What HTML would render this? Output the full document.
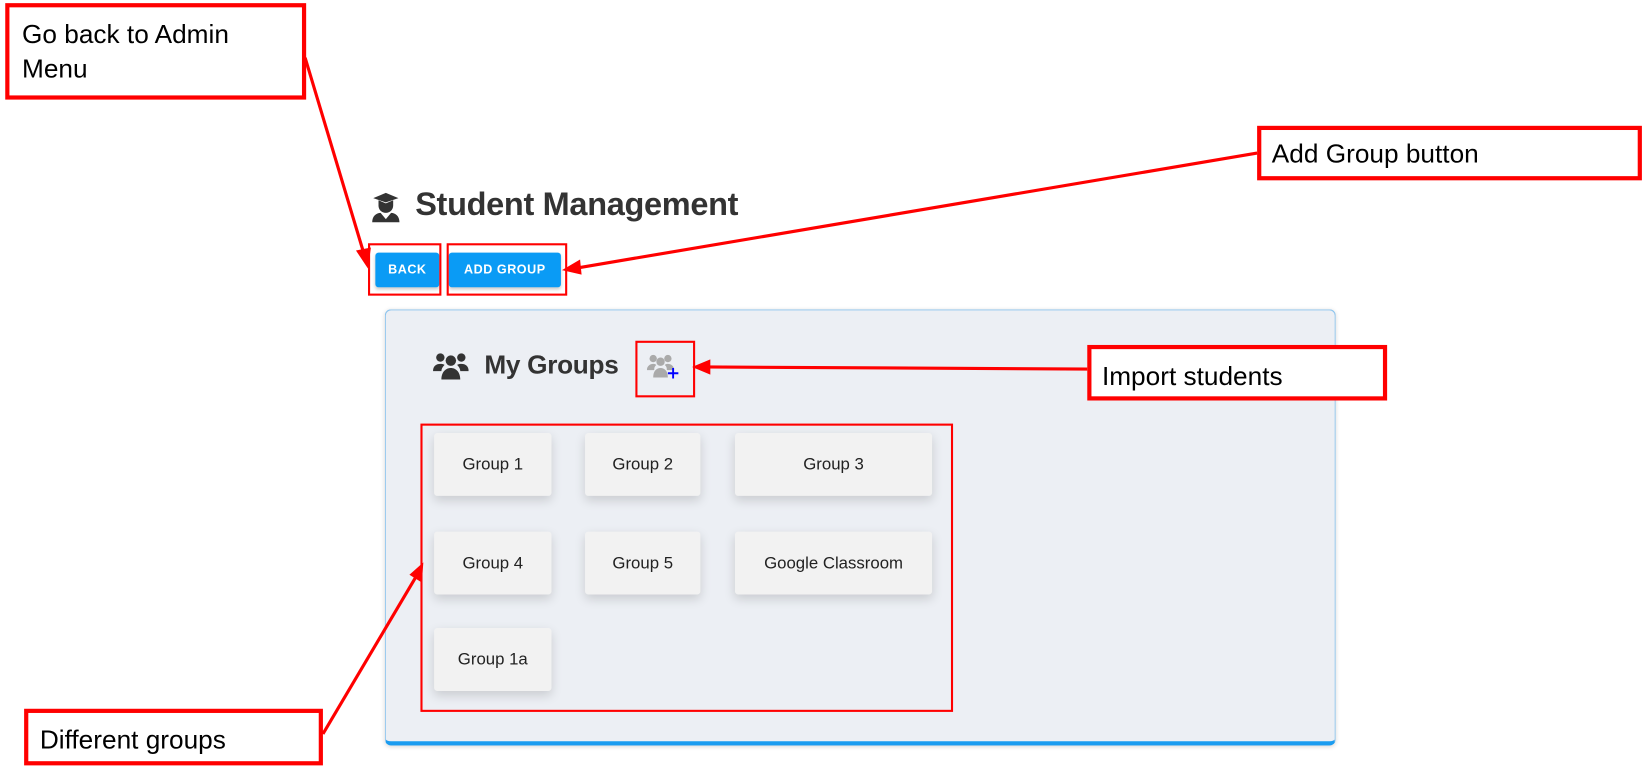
<!DOCTYPE html>
<html><head><meta charset="utf-8"><style>
html,body{margin:0;padding:0;background:#fff;width:1644px;height:777px;overflow:hidden}
#w{position:absolute;left:0;top:0;width:1568px;height:741px;transform:scale(1.04847);transform-origin:0 0;font-family:"Liberation Sans",sans-serif}
.a{position:absolute;box-sizing:border-box}
.rb{border:4px solid #f00;background:#fff}
.rt{border:2px solid #f00}
.lbl{font-size:25px;color:#000;line-height:33px}
.btn{background:#0a9bf5;color:#fff;font-weight:bold;font-size:12px;letter-spacing:.5px;text-align:center;line-height:33px;border-radius:3px;box-shadow:0 2px 3px rgba(0,0,0,.2)}
.card{background:#f2f2f2;border-radius:3px;box-shadow:0 4px 10px rgba(0,0,0,.15);font-size:16px;color:#222;text-align:center;line-height:62px}
</style></head><body><div id="w">
<svg class="a" style="left:353px;top:183px" width="32" height="30" viewBox="0 0 32 30"><path d="M3 6 L15 1 L27 6 L15 10Z M8 8v5c0 4 3 7 7 7s7-3 7-7V8L15 11Z M2 29 c0-6 4-9 8-9 l5 6 5-6 c4 0 8 3 8 9Z" fill="#333"/></svg>
<div class="a" style="left:396px;top:177px;font-size:31px;font-weight:bold;color:#333;letter-spacing:-.3px">Student Management</div>
<div class="a btn" style="left:358px;top:241px;width:61px;height:33px">BACK</div>
<div class="a btn" style="left:428px;top:241px;width:107px;height:33px">ADD GROUP</div>
<div class="a rt" style="left:351px;top:232px;width:70px;height:50px"></div>
<div class="a rt" style="left:426px;top:232px;width:115px;height:50px"></div>

<div class="a" style="left:367px;top:295px;width:907px;height:416px;background:#eceff4;border:1px solid #8cc4ee;border-bottom:4px solid #1a9cf0;border-radius:6px;box-shadow:0 1px 4px rgba(0,0,0,.15)"></div>
<svg class="a" style="left:413px;top:335px" width="34" height="28" viewBox="0 0 34 28"><circle cx="7" cy="6" r="4" fill="#333"/><circle cx="27" cy="6" r="4" fill="#333"/><circle cx="17" cy="9" r="5" fill="#333"/><path d="M0 19c0-5 3-7 7-7 3 0 4 1 4 1-2 2-3 4-3 6Z M34 19c0-5-3-7-7-7-3 0-4 1-4 1 2 2 3 4 3 6Z M8 27c0-7 4-11 9-11s9 4 9 11Z" fill="#333"/></svg>
<div class="a" style="left:462px;top:334px;font-size:25px;font-weight:bold;color:#333;letter-spacing:-.3px">My Groups</div>
<svg class="a" style="left:617px;top:337px" width="32" height="26" viewBox="0 0 32 26"><circle cx="6" cy="5" r="3.5" fill="#aaa"/><circle cx="20" cy="5" r="3.5" fill="#aaa"/><circle cx="13" cy="8" r="4" fill="#aaa"/><path d="M0 16c0-4 3-6 6-6 2 0 3 1 3 1-2 2-2 3-2 5Z M26 16c0-4-3-6-6-6-2 0-3 1-3 1 2 2 2 3 2 5Z M6 23c0-6 3-9 7-9s7 3 7 9Z" fill="#aaa"/><path d="M25 14v10M20 19h10" stroke="#00f" stroke-width="1.8"/></svg>
<div class="a rt" style="left:606px;top:325px;width:57px;height:54px"></div>

<div class="a card" style="left:414px;top:413px;width:112px;height:60px">Group 1</div>
<div class="a card" style="left:558px;top:413px;width:110px;height:60px">Group 2</div>
<div class="a card" style="left:701px;top:413px;width:188px;height:60px">Group 3</div>
<div class="a card" style="left:414px;top:507px;width:112px;height:60px">Group 4</div>
<div class="a card" style="left:558px;top:507px;width:110px;height:60px">Group 5</div>
<div class="a card" style="left:701px;top:507px;width:188px;height:60px">Google Classroom</div>
<div class="a card" style="left:414px;top:599px;width:112px;height:60px">Group 1a</div>
<div class="a rt" style="left:401px;top:404px;width:508px;height:275px"></div>

<div class="a rb lbl" style="left:5px;top:3px;width:287px;height:92px;padding:10px 0 0 12px">Go back to Admin<br>Menu</div>
<div class="a rb lbl" style="left:1199px;top:120px;width:367px;height:52px;padding:7px 0 0 10px">Add Group button</div>
<div class="a rb lbl" style="left:1037px;top:329px;width:286px;height:53px;padding:10px 0 0 10px">Import students</div>
<div class="a rb lbl" style="left:23px;top:676px;width:285px;height:54px;padding:10px 0 0 11px">Different groups</div>

<svg class="a" style="left:0;top:0" width="1568" height="741"><g stroke="#f00" stroke-width="3" fill="#f00">
<line x1="291" y1="55" x2="348" y2="245"/><path d="M350 252 l-8-12 10-2Z"/>
<line x1="1199" y1="146" x2="548" y2="256"/><path d="M540 257 l12-7 1 10Z"/>
<line x1="1037" y1="352" x2="672" y2="350"/><path d="M664 350 l12-5 0 10Z"/>
<line x1="308" y1="700" x2="398" y2="548"/><path d="M402 540 l-1 13-8-5Z"/>
</g></svg>
</div></body></html>
